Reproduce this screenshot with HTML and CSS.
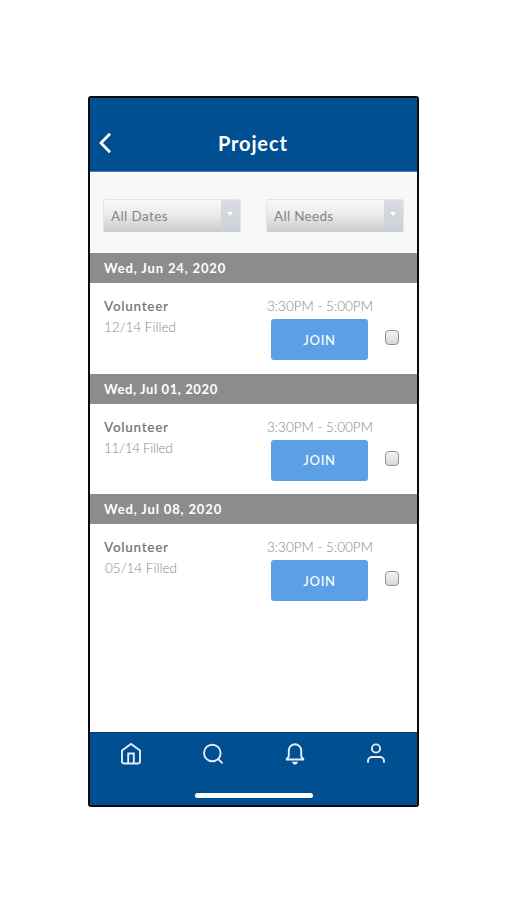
FILE: index.html
```
<!DOCTYPE html>
<html lang="en">
<head>
  <title>Project</title>
  <meta charset="UTF-8">
  <link rel="stylesheet" href="styles.css">
</head>

<body>
  <div class="phone">

    <header class="header">
      <svg class="back" viewBox="0 0 14 22"><path d="M12 1.800 3 11l9 9.200"/></svg>
      <h1>Project</h1>
    </header>

    <div class="filters">
      <div class="select"><span class="selectText">All Dates</span><span class="arrow"></span></div>
      <div class="select"><span class="selectText needs">All Needs</span><span class="arrow"></span></div>
    </div>

    <main class="list">
      <h2 class="date">Wed, Jun 24, 2020</h2>
      <div class="slot">
        <div class="role">
          <p class="name">Volunteer</p>
          <p class="filled">12/14 Filled</p>
        </div>
        <div class="shift">
          <p class="time">3:30PM - 5:00PM</p>
          <button class="join">JOIN</button>
        </div>
        <span class="check"></span>
      </div>

      <h2 class="date narrow">Wed, Jul 01, 2020</h2>
      <div class="slot">
        <div class="role">
          <p class="name">Volunteer</p>
          <p class="filled narrow">11/14 Filled</p>
        </div>
        <div class="shift">
          <p class="time">3:30PM - 5:00PM</p>
          <button class="join">JOIN</button>
        </div>
        <span class="check"></span>
      </div>

      <h2 class="date">Wed, Jul 08, 2020</h2>
      <div class="slot">
        <div class="role">
          <p class="name">Volunteer</p>
          <p class="filled wide">05/14 Filled</p>
        </div>
        <div class="shift">
          <p class="time">3:30PM - 5:00PM</p>
          <button class="join">JOIN</button>
        </div>
        <span class="check"></span>
      </div>
    </main>

    <nav class="nav">
      <div class="icons">
        <svg viewBox="0 0 24 24"><path d="M3 8.500 12 2l9 6.500v11a2 2 0 0 1-2 2H5a2 2 0 0 1-2-2z"/><path d="M9.200 21.500V11.500h5.600v10"/></svg>
        <svg viewBox="0 0 24 24"><circle cx="11.300" cy="11" r="8.300"/><path d="m17.200 17 4.300 4.300"/></svg>
        <svg class="bell" viewBox="0 0 24 24"><path d="M3 17.500h18c-1.800-.7-2.800-2-2.800-4.500V8.500a6.200 6.200 0 0 0-12.400 0V13c0 2.500-1 3.800-2.800 4.500z"/><path d="M10.500 20.800a1.700 1.700 0 0 0 3 0z"/></svg>
        <svg viewBox="0 0 24 24"><circle cx="12" cy="6.500" r="4.100"/><path d="M4 20.800v-1.800a4 4 0 0 1 4-4h8a4 4 0 0 1 4 4v1.800"/></svg>
      </div>
      <div class="homeBar"></div>
    </nav>

  </div>
</body>
</html>
```
FILE: styles.css
```
* {
  box-sizing: border-box;
}
body {
  margin: 0;
  background: #fff;
  font-family: Lato, "Open Sans", sans-serif;
}
h1, h2, p {
  margin: 0;
}
.phone {
  display: flex;
  flex-direction: column;
  width: 331px;
  height: 711px;
  margin: 96px 0 0 88px;
  border: 2px solid #0b0b0d;
  border-radius: 3px;
  overflow: hidden;
}
.header {
  display: flex;
  align-items: center;
  height: 74px;
  padding: 16px 8px 0;
  background: #004f90;
  border-bottom: 1px solid #4c7ab5;
  color: #fff;
}
.back {
  width: 14px;
  height: 22px;
}
.back path {
  fill: none;
  stroke: #fff;
  stroke-width: 2.8;
}
h1 {
  flex: 1;
  margin-left: 106px;
  font-size: 20px;
  line-height: 24px;
  letter-spacing: 0.85px;
}
.filters {
  display: flex;
  gap: 25px;
  height: 81px;
  padding: 27px 13px 0;
  background: #f8f8f8;
}
.select {
  display: flex;
  width: 138px;
  height: 33px;
  border: 1px solid #e2e4e6;
  border-bottom-color: #c9cbcd;
  border-radius: 3px;
  background: linear-gradient(#f9f9f9, #ececec 45%, #cbcccd);
  overflow: hidden;
}
.selectText {
  flex: 1;
  padding-left: 7px;
  color: #858585;
  font-size: 13.5px;
  line-height: 32px;
  letter-spacing: 0.4px;
}
.selectText.needs {
  letter-spacing: 0.3px;
}
.arrow {
  width: 19px;
  padding: 12px 0 0 6px;
  background: linear-gradient(#d9dce1, #cbd1d8);
}
.arrow::before {
  content: "";
  display: block;
  width: 0;
  border: 3px solid transparent;
  border-top: 4px solid #fff;
}
.list {
  flex: 1;
}
.date {
  height: 30px;
  padding-left: 14px;
  background: #8c8c8c;
  color: #fff;
  font-size: 13px;
  line-height: 30px;
  letter-spacing: 0.85px;
}
.date.narrow {
  letter-spacing: 0.6px;
}
.slot {
  display: flex;
  height: 90.5px;
  padding: 14px 0 0 14px;
}
.role {
  width: 163px;
}
.name {
  color: #777;
  font-size: 13.5px;
  font-weight: 600;
  line-height: 18px;
  letter-spacing: 0.7px;
}
.filled {
  margin-top: 3px;
  color: #888;
  font-size: 13.5px;
  font-weight: 300;
  line-height: 18px;
}
.filled.narrow {
  letter-spacing: -0.3px;
}
.filled.wide {
  padding-left: 1px;
}
.shift {
  width: 118px;
}
.time {
  color: #888;
  font-size: 13.5px;
  font-weight: 300;
  line-height: 18px;
  white-space: nowrap;
}
.join {
  display: block;
  width: 97px;
  height: 41px;
  margin: 4px 0 0 4px;
  padding: 0;
  border: 0;
  border-radius: 3px;
  background: #5ba0e6;
  color: #fff;
  font: 500 13px Lato, sans-serif;
  letter-spacing: 0.7px;
}
.check {
  width: 14px;
  height: 15px;
  margin-top: 33px;
  border: 1.5px solid #929292;
  border-radius: 4px;
  background: linear-gradient(#f4f4f4, #d8d8d8);
}
.nav {
  height: 73px;
  background: #004f90;
  border-top: 1px solid #073584;
}
.icons {
  display: flex;
  justify-content: space-between;
  padding: 9px 29px 0;
}
.icons svg {
  width: 24px;
  height: 24px;
  fill: none;
  stroke: #e3ecfb;
  stroke-width: 1.9;
}
.icons .bell {
  margin-right: -1px;
}
.homeBar {
  width: 118px;
  height: 5px;
  margin: 27px 0 0 105px;
  border-radius: 3px;
  background: #fff;
}
```
